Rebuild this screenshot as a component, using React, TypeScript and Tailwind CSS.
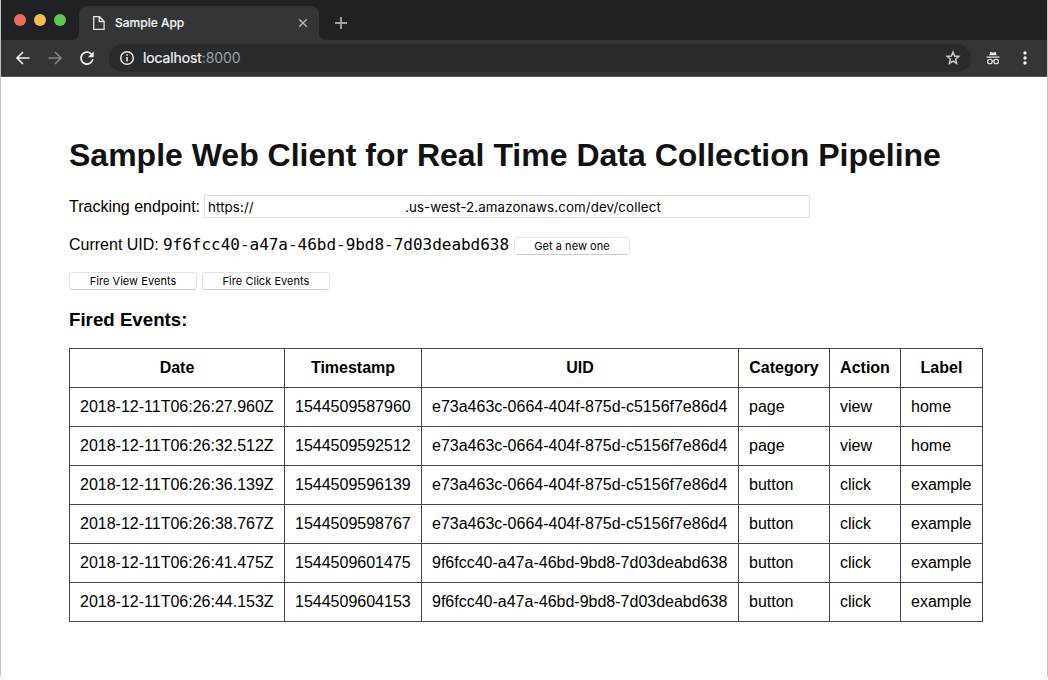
import type { ReactNode } from 'react';

const events = [
  ['2018-12-11T06:26:27.960Z', '1544509587960', 'e73a463c-0664-404f-875d-c5156f7e86d4', 'page', 'view', 'home'],
  ['2018-12-11T06:26:32.512Z', '1544509592512', 'e73a463c-0664-404f-875d-c5156f7e86d4', 'page', 'view', 'home'],
  ['2018-12-11T06:26:36.139Z', '1544509596139', 'e73a463c-0664-404f-875d-c5156f7e86d4', 'button', 'click', 'example'],
  ['2018-12-11T06:26:38.767Z', '1544509598767', 'e73a463c-0664-404f-875d-c5156f7e86d4', 'button', 'click', 'example'],
  ['2018-12-11T06:26:41.475Z', '1544509601475', '9f6fcc40-a47a-46bd-9bd8-7d03deabd638', 'button', 'click', 'example'],
  ['2018-12-11T06:26:44.153Z', '1544509604153', '9f6fcc40-a47a-46bd-9bd8-7d03deabd638', 'button', 'click', 'example'],
];

const columns = ['Date', 'Timestamp', 'UID', 'Category', 'Action', 'Label'];

function Icon({ children, className = '' }: { children: ReactNode; className?: string }) {
  return (
    <svg viewBox="0 0 16 16" className={`block size-4 shrink-0 ${className}`} fill="none" stroke="currentColor">
      {children}
    </svg>
  );
}

function TabStrip() {
  return (
    <div className="flex h-10 items-end bg-[#202124] pl-[13px]">
      <div className="mb-3.5 flex gap-2">
        <span className="size-3 rounded-full bg-[#ed6a5e]" />
        <span className="size-3 rounded-full bg-[#f5bf4f]" />
        <span className="size-3 rounded-full bg-[#61c554]" />
      </div>
      <svg viewBox="0 0 8 8" className="ml-[5px] size-2 shrink-0" fill="#323639">
        <path d="M8 0v8H0c5 0 8-3 8-8Z" />
      </svg>
      <div className="flex h-[34px] w-60 items-center rounded-t-lg bg-[#323639] pr-2 pl-3">
        <Icon className="text-[#e2e3e4]">
          <path d="M2.7 1.7h5.8L13.1 6.2v8.1H2.7ZM8.2 1.7v4.8h4.9" strokeWidth="1.3" />
        </Icon>
        <span className="ml-2 grow text-[12px] font-medium text-[#f1f3f4] [-webkit-text-stroke:0.15px_#f1f3f4]">Sample App</span>
        <Icon className="text-[#b6b8ba]">
          <path d="m4.2 4.2 7.6 7.6m0-7.6-7.6 7.6" strokeWidth="1.4" />
        </Icon>
      </div>
      <svg viewBox="0 0 8 8" className="size-2 shrink-0" fill="#323639">
        <path d="M0 0v8h8C3 8 0 5 0 0Z" />
      </svg>
      <Icon className="mb-[9px] ml-1.5 text-[#a1a3a6]">
        <path d="M8 2v12M2 8h12" strokeWidth="1.8" />
      </Icon>
    </div>
  );
}

function Toolbar() {
  return (
    <div className="flex h-[37px] items-center border-b border-[#515456] bg-[#323639] pr-[14px] pl-3.5">
      <Icon className="text-[#f1f3f4]">
        <path d="M14.5 8H2.5M8 2 2 8l6 6" strokeWidth="1.6" />
      </Icon>
      <Icon className="ml-4 text-[#828588]">
        <path d="M1.5 8h12M8 2l6 6-6 6" strokeWidth="1.6" />
      </Icon>
      <Icon className="ml-4 text-[#f1f3f4]">
        <path d="M13.9 9.2A6 6 0 1 1 12.2 3.8" strokeWidth="1.7" />
        <path d="M14.7 1.5v5.8H8.9Z" fill="currentColor" stroke="none" />
      </Icon>
      <div className="ml-3.5 flex h-7 w-[862px] items-center rounded-full bg-[#282c2f] pr-2.5 pl-2.5">
        <Icon className="text-[#e8eaed]">
          <circle cx="8" cy="8" r="6.3" strokeWidth="1.45" />
          <path d="M8 7v4.5M8 4.3v1.5" strokeWidth="1.6" />
        </Icon>
        <span className="mb-0.5 ml-2 grow text-[14px] tracking-[-0.12px] text-[#9aa0a6]">
          <span className="text-[#f1f3f4] [-webkit-text-stroke:0.2px_#f1f3f4]">localhost</span>:8000
        </span>
        <Icon className="text-[#c8cacc]">
          <path d="m8 2 1.6 4 4.2.4-3.2 2.8 1 4.2L8 11.2l-3.6 2.2 1-4.2-3.2-2.8L6.4 6Z" strokeWidth="1.5" />
        </Icon>
      </div>
      <Icon className="ml-3.5 text-[#e8eaed]">
        <path d="m4.3 5.3.9-2.8c.1-.4.4-.5.8-.4L8 2.7l2-.6c.4-.1.7 0 .8.4l.9 2.8Z" fill="currentColor" stroke="none" />
        <path d="M1.6 7.1h12.8" strokeWidth="1.2" />
        <circle cx="4.9" cy="11.5" r="2.3" strokeWidth="1.1" />
        <circle cx="11.1" cy="11.5" r="2.3" strokeWidth="1.1" />
        <path d="M7 11q1-.7 2 0" strokeWidth="1" />
      </Icon>
      <Icon className="ml-4 text-[#f1f3f4]">
        <g fill="currentColor" stroke="none">
          <circle cx="8" cy="3" r="1.7" />
          <circle cx="8" cy="8" r="1.7" />
          <circle cx="8" cy="13" r="1.7" />
        </g>
      </Icon>
    </div>
  );
}

function Button({ children, className }: { children: ReactNode; className: string }) {
  return (
    <button
      className={`h-[18px] rounded-[4px] border border-[#e2e2e2] border-b-[#cccccc] bg-white font-['Inter',sans-serif] text-[11px] leading-4 tracking-[0.04px] text-black ${className}`}
    >
      {children}
    </button>
  );
}

export default function App() {
  return (
    <div className="flex h-[680px] w-[1048px] flex-col overflow-hidden bg-white font-['Inter',sans-serif]">
      <div className="flex grow flex-col overflow-hidden rounded-b-md border-x border-[#c3c3c3]">
        <TabStrip />
        <Toolbar />
        <main className="grow bg-white pl-[68px] font-['Liberation_Sans',Arial,sans-serif] text-[16px] text-black">
          <h1 className="mt-[60px] h-[37px] text-[32px] leading-[37px] font-bold whitespace-nowrap text-[#111]">
            Sample Web Client for Real Time Data Collection Pipeline
          </h1>
          <div className="mt-[21px] flex h-[23px] items-center">
            <label htmlFor="endpoint" className="w-[135px] whitespace-nowrap">Tracking endpoint:</label>
            <div id="endpoint" className="flex h-[23px] w-[606px] items-center border border-[#dfdfdf] pt-0.5 pl-[3px] font-['Inter',sans-serif] text-[13.3px] tracking-[0.12px]">
              <span className="w-[197px]">https://</span>
              <span className="whitespace-nowrap">.us-west-2.amazonaws.com/dev/collect</span>
            </div>
          </div>
          <div className="mt-[15px] flex h-6 items-center">
            <span className="w-[94px] whitespace-nowrap">Current UID:</span>
            <code className="w-[351px] font-['DejaVu_Sans_Mono',monospace] text-[16px] tracking-[-0.02px] whitespace-nowrap">
              9f6fcc40-a47a-46bd-9bd8-7d03deabd638
            </code>
            <Button className="mt-px w-[116px]">Get a new one</Button>
          </div>
          <div className="mt-[15px] flex gap-[5px]">
            <Button className="w-32">Fire View Events</Button>
            <Button className="w-32">Fire Click Events</Button>
          </div>
          <h3 className="mt-[19px] h-[22px] text-[18.7px] leading-[22px] font-bold">Fired Events:</h3>
          <table className="mt-[17px] w-[914px] table-fixed border-collapse">
            <colgroup>
              <col className="w-[215px]" />
              <col className="w-[137px]" />
              <col className="w-[317px]" />
              <col className="w-[91px]" />
              <col className="w-[71px]" />
              <col className="w-[82px]" />
            </colgroup>
            <thead>
              <tr className="h-[39px]">
                {columns.map((name) => (
                  <th key={name} className="border border-[#444] p-0 text-center font-bold">{name}</th>
                ))}
              </tr>
            </thead>
            <tbody>
              {events.map((event) => (
                <tr key={event[0]} className="h-[39px]">
                  {event.map((value, i) => (
                    <td key={i} className="border border-[#444] py-0 pr-0 pl-2.5 whitespace-nowrap">{value}</td>
                  ))}
                </tr>
              ))}
            </tbody>
          </table>
        </main>
      </div>
    </div>
  );
}
